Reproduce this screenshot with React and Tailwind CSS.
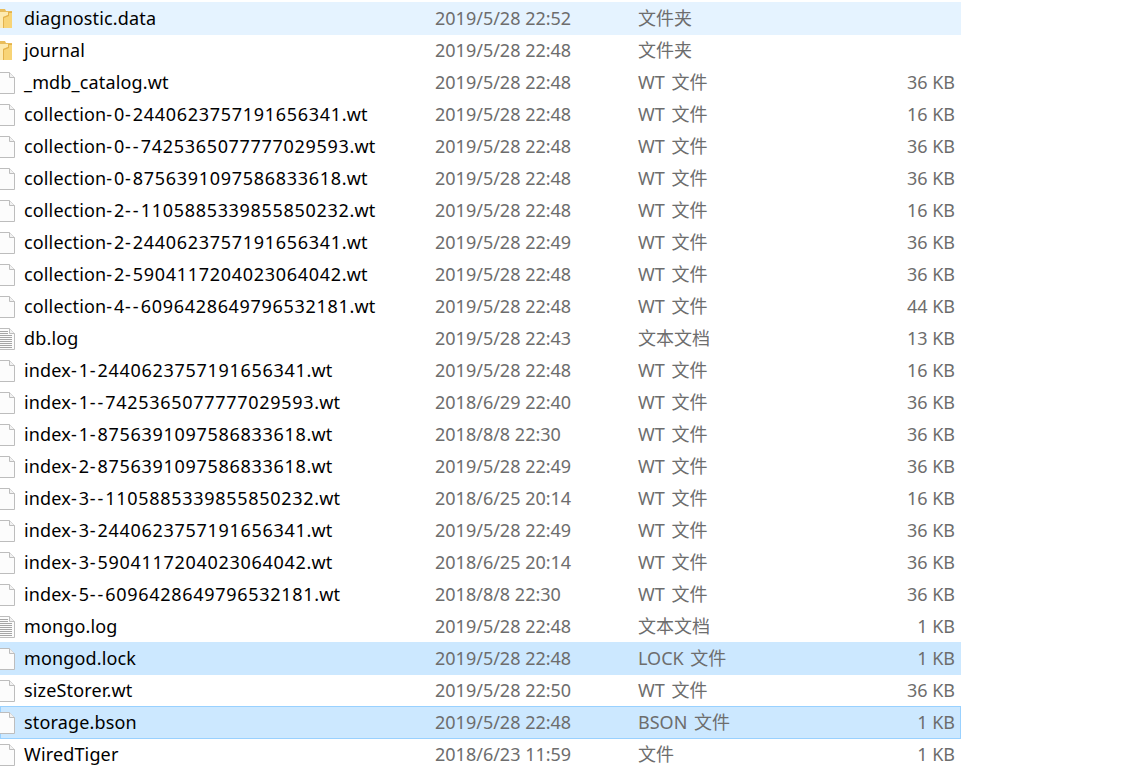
const files = [
  { name: "diagnostic.data", date: "2019/5/28 22:52", type: "文件夹", size: "", icon: "folder", state: "hover" },
  { name: "journal", date: "2019/5/28 22:48", type: "文件夹", size: "", icon: "folder" },
  { name: "_mdb_catalog.wt", date: "2019/5/28 22:48", type: "WT 文件", size: "36 KB", icon: "file" },
  { name: "collection-0-2440623757191656341.wt", date: "2019/5/28 22:48", type: "WT 文件", size: "16 KB", icon: "file" },
  { name: "collection-0--7425365077777029593.wt", date: "2019/5/28 22:48", type: "WT 文件", size: "36 KB", icon: "file" },
  { name: "collection-0-8756391097586833618.wt", date: "2019/5/28 22:48", type: "WT 文件", size: "36 KB", icon: "file" },
  { name: "collection-2--1105885339855850232.wt", date: "2019/5/28 22:48", type: "WT 文件", size: "16 KB", icon: "file" },
  { name: "collection-2-2440623757191656341.wt", date: "2019/5/28 22:49", type: "WT 文件", size: "36 KB", icon: "file" },
  { name: "collection-2-5904117204023064042.wt", date: "2019/5/28 22:48", type: "WT 文件", size: "36 KB", icon: "file" },
  { name: "collection-4--6096428649796532181.wt", date: "2019/5/28 22:48", type: "WT 文件", size: "44 KB", icon: "file" },
  { name: "db.log", date: "2019/5/28 22:43", type: "文本文档", size: "13 KB", icon: "text" },
  { name: "index-1-2440623757191656341.wt", date: "2019/5/28 22:48", type: "WT 文件", size: "16 KB", icon: "file" },
  { name: "index-1--7425365077777029593.wt", date: "2018/6/29 22:40", type: "WT 文件", size: "36 KB", icon: "file" },
  { name: "index-1-8756391097586833618.wt", date: "2018/8/8 22:30", type: "WT 文件", size: "36 KB", icon: "file" },
  { name: "index-2-8756391097586833618.wt", date: "2019/5/28 22:49", type: "WT 文件", size: "36 KB", icon: "file" },
  { name: "index-3--1105885339855850232.wt", date: "2018/6/25 20:14", type: "WT 文件", size: "16 KB", icon: "file" },
  { name: "index-3-2440623757191656341.wt", date: "2019/5/28 22:49", type: "WT 文件", size: "36 KB", icon: "file" },
  { name: "index-3-5904117204023064042.wt", date: "2018/6/25 20:14", type: "WT 文件", size: "36 KB", icon: "file" },
  { name: "index-5--6096428649796532181.wt", date: "2018/8/8 22:30", type: "WT 文件", size: "36 KB", icon: "file" },
  { name: "mongo.log", date: "2019/5/28 22:48", type: "文本文档", size: "1 KB", icon: "text" },
  { name: "mongod.lock", date: "2019/5/28 22:48", type: "LOCK 文件", size: "1 KB", icon: "file", state: "selected" },
  { name: "sizeStorer.wt", date: "2019/5/28 22:50", type: "WT 文件", size: "36 KB", icon: "file" },
  { name: "storage.bson", date: "2019/5/28 22:48", type: "BSON 文件", size: "1 KB", icon: "file", state: "focused" },
  { name: "WiredTiger", date: "2018/6/23 11:59", type: "文件", size: "1 KB", icon: "file" },
];

function FolderIcon() {
  return (
    <svg width="15" height="21" viewBox="0 0 15 21" className="-ml-px shrink-0">
      <path d="M0 1h5l1 2h6v17H0z" fill="#e9bd5b" />
      <path d="M0 5h12v15H0z" fill="#f8d476" />
      <path d="M0 4h8v3l-5 2v11H0z" fill="#fdeab0" />
      <path d="M3 9l5-2v-3h4v1h-3v3l-5 2v10H3z" fill="#e3b24c" />
    </svg>
  );
}

function FileIcon({ lines }) {
  return (
    <svg width="15" height="22" viewBox="0 0 15 22" className="-ml-px shrink-0">
      <path d="M-1 .5h10.5l5 5v16H-1z" fill="#fcfcfc" stroke="#bdbdbd" />
      <path d="M9.5 .5v5h5" fill="#f2f2f2" stroke="#bdbdbd" />
      {lines && (
        <path
          d="M0 3.5h8M0 5.5h8M0 7.5h12M0 9.5h12M0 11.5h12M0 13.5h12M0 15.5h12M0 17.5h12M0 19.5h12"
          stroke="#a6a6a6"
          strokeWidth="1"
        />
      )}
    </svg>
  );
}

// digits and hyphens come out wider in the original font, so space them apart
function FileName({ name }) {
  return (
    <span className="ml-[9px] tracking-[0.15px] text-black">
      {name.split(/(\d+|-)/).map((part, i) => {
        if (part === "-") {
          return (
            <span key={i} className="tracking-[2px]">
              {part}
            </span>
          );
        }
        if (/^\d+$/.test(part)) {
          return (
            <span key={i} className="tracking-[0.7px]">
              {part}
            </span>
          );
        }
        return part;
      })}
    </span>
  );
}

function Row({ file }) {
  const bg =
    file.state === "hover"
      ? "bg-[#e5f3ff] border-transparent"
      : file.state === "selected"
        ? "bg-[#cce8ff] border-transparent"
        : file.state === "focused"
          ? "bg-[#cce8ff] border-[#99d1ff]"
          : "border-transparent";
  return (
    <div className={`-mb-px flex h-[33px] items-center border ${bg}`}>
      <div className="flex w-[434px] shrink-0 items-center">
        {file.icon === "folder" ? <FolderIcon /> : <FileIcon lines={file.icon === "text"} />}
        <FileName name={file.name} />
      </div>
      <div className="w-[203px] shrink-0 text-[#6d6d6d]">{file.date}</div>
      <div className="w-[200px] shrink-0 text-[#6d6d6d] [word-spacing:2px]">{file.type}</div>
      <div className="flex-1 pr-[5px] text-right text-[#6d6d6d]">{file.size}</div>
    </div>
  );
}

export default function App() {
  return (
    <div className="h-[766px] w-[1128px] overflow-hidden bg-white pt-[2px] font-['Noto_Sans','Noto_Sans_CJK_SC',sans-serif] text-[18px]">
      <div className="w-[961px]">
        {files.map((file) => (
          <Row key={file.name} file={file} />
        ))}
      </div>
    </div>
  );
}
